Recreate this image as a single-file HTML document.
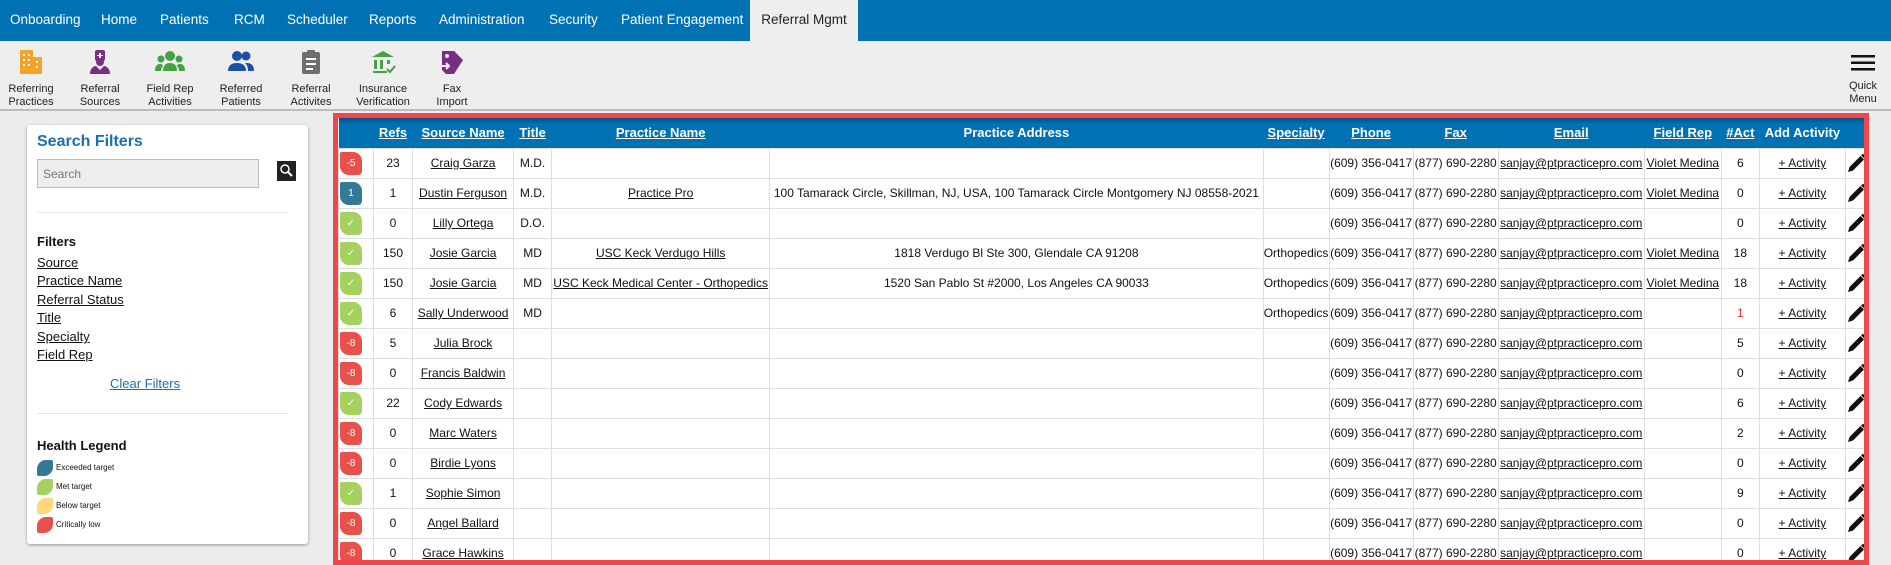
<!DOCTYPE html>
<html><head><meta charset="utf-8"><style>
*{box-sizing:border-box;margin:0;padding:0}
body{width:1891px;height:565px;overflow:hidden;background:#ececec;font-family:"Liberation Sans",Arial,sans-serif;position:relative;color:#111}
.nav{position:absolute;left:0;top:0;width:1891px;height:41px;background:#0071b2}
.nav span{position:absolute;top:12px;color:#fff;font-size:13.5px}
.nav .tab{top:0;height:41px;background:#eee;color:#222;padding-top:12px;left:750px;width:108px;text-align:center}
.tb{position:absolute;left:0;top:41px;width:1891px;height:70px;background:#eee;border-bottom:2px solid #bbb}
.ti{position:absolute;top:8px;width:80px;text-align:center;font-size:11px;line-height:13px;color:#222}
.ti svg{display:block;margin:0 auto 8px}
.panel{position:absolute;left:27px;top:125px;width:281px;height:419px;background:#fff;border-radius:3px;box-shadow:0 1px 3px rgba(0,0,0,.35)}
.panel a{color:#111;text-decoration:underline;font-size:13px;position:absolute;left:10px}
.tablebox{position:absolute;left:333px;top:113px;width:1536px;height:452px;border:5px solid #f3454a;background:#fff;overflow:hidden}
table{border-collapse:collapse;table-layout:fixed;width:1531px;font-size:12px}
th{height:30px;background:linear-gradient(#0b4f7d,#0071b2 6px);color:#fff;font-size:13px;font-weight:bold;text-decoration:underline;text-align:center;white-space:nowrap}
td{height:30px;border:1px solid #ddd;text-align:center;white-space:nowrap;overflow:hidden;padding:0}
td u{text-decoration:underline}
.b{display:block;width:22px;height:23px;border-radius:2px 9px 4px 9px;color:#fff;font-size:10px;line-height:23px;text-align:center;margin-left:1px}
.r{background:#e8504c}.g{background:#a5d25f}.bl{background:#327a96}
.pen{display:block;margin:0 auto}
</style></head><body>
<div class="nav">
<span style="left:10px">Onboarding</span><span style="left:101px">Home</span><span style="left:160px">Patients</span><span style="left:234px">RCM</span><span style="left:287px">Scheduler</span><span style="left:369px">Reports</span><span style="left:439px">Administration</span><span style="left:549px">Security</span><span style="left:621px">Patient Engagement</span><span class="tab">Referral Mgmt</span>
</div>
<div class="tb">
<div class="ti" style="left:-9px"><svg width="26" height="26" viewBox="0 0 26 26"><rect x="2" y="1" width="13" height="24" fill="#f6a32a"/><rect x="15" y="8" width="9" height="17" fill="#f6a32a"/><g fill="#fff"><rect x="5" y="5" width="2" height="2"/><rect x="10" y="5" width="2" height="2"/><rect x="5" y="10" width="2" height="2"/><rect x="10" y="10" width="2" height="2"/><rect x="5" y="15" width="2" height="2"/><rect x="10" y="15" width="2" height="2"/><rect x="18" y="12" width="2" height="2"/><rect x="18" y="17" width="2" height="2"/></g></svg>Referring<br>Practices</div>
<div class="ti" style="left:60px"><svg width="26" height="26" viewBox="0 0 26 26"><rect x="8" y="1" width="10" height="11" rx="2" fill="#7b2d84"/><path d="M12 4h2v2h2v1h-2v2h-2v-2h-2v-1h2z" fill="#fff"/><circle cx="13" cy="13" r="4" fill="#7b2d84"/><path d="M3 25c0-6 4-8 6-8l4 4 4-4c2 0 6 2 6 8z" fill="#7b2d84"/></svg>Referral<br>Sources</div>
<div class="ti" style="left:130px"><svg width="30" height="26" viewBox="0 0 30 26"><g fill="#44a244"><circle cx="15" cy="7" r="5"/><circle cx="6" cy="10" r="3.5"/><circle cx="24" cy="10" r="3.5"/><path d="M8 22c0-6 3-8 7-8s7 2 7 8z"/><path d="M0 22c0-5 2-7 5-7 2 0 3 1 3 2-1 1-2 3-2 5z"/><path d="M30 22c0-5-2-7-5-7-2 0-3 1-3 2 1 1 2 3 2 5z"/></g></svg>Field Rep<br>Activities</div>
<div class="ti" style="left:201px"><svg width="28" height="26" viewBox="0 0 28 26"><g fill="#1f4fa0"><circle cx="10" cy="7" r="5"/><circle cx="19" cy="7" r="4.5"/><path d="M1 22c0-6 4-8 9-8s9 2 9 8z"/><path d="M20 14c4 0 7 2 7 8h-6c0-4-1-6-3-8z"/></g></svg>Referred<br>Patients</div>
<div class="ti" style="left:271px"><svg width="26" height="26" viewBox="0 0 26 26"><rect x="4" y="3" width="18" height="22" rx="2" fill="#6e6e6e"/><rect x="9" y="1" width="8" height="4" rx="1" fill="#6e6e6e"/><g fill="#fff"><rect x="8" y="9" width="10" height="2"/><rect x="8" y="14" width="10" height="2"/><rect x="8" y="19" width="7" height="2"/></g></svg>Referral<br>Activites</div>
<div class="ti" style="left:343px"><svg width="26" height="26" viewBox="0 0 26 26"><g fill="#44a244"><path d="M2 8l11-6 11 6z"/><rect x="4" y="11" width="3" height="9"/><rect x="10" y="11" width="3" height="9"/><rect x="3" y="22" width="14" height="2"/><rect x="17" y="11" width="3" height="4"/></g><path d="M17 20l3 3 5-6" stroke="#44a244" stroke-width="2" fill="none"/></svg>Insurance<br>Verification</div>
<div class="ti" style="left:412px"><svg width="26" height="26" viewBox="0 0 26 26"><path d="M3 2h12l9 9-9 14H7l-4-4z" fill="#7b2d84"/><circle cx="8" cy="7" r="2" fill="#eee"/><path d="M2 17h8M7 14l3 3-3 3" stroke="#eee" stroke-width="2" fill="none"/></svg>Fax<br>Import</div>
<div class="ti" style="left:1823px;top:13px"><svg width="24" height="18" viewBox="0 0 24 18"><rect y="1" width="24" height="2.5" fill="#111"/><rect y="7.5" width="24" height="2.5" fill="#111"/><rect y="14" width="24" height="2.5" fill="#111"/></svg>Quick<br>Menu</div>
</div>
<div class="panel">
<div style="position:absolute;left:10px;top:8px;color:#1b6fb0;font-weight:bold;font-size:16px">Search Filters</div>
<div style="position:absolute;left:10px;top:34px;width:222px;height:29px;background:#eee;border:1px solid #bbb;font-size:12px;color:#777;padding:7px 5px">Search</div>
<div style="position:absolute;left:250px;top:36px;width:19px;height:20px;background:#222"><svg width="19" height="20" viewBox="0 0 19 20"><circle cx="8" cy="8" r="4" stroke="#fff" stroke-width="1.5" fill="none"/><path d="M11 11l4 4" stroke="#fff" stroke-width="2"/></svg></div>
<div style="position:absolute;left:10px;top:87px;width:251px;border-top:1px solid #e6e6e6"></div>
<div style="position:absolute;left:10px;top:109px;font-weight:bold;font-size:13px">Filters</div>
<a style="top:130px">Source</a><a style="top:148px">Practice Name</a><a style="top:167px">Referral Status</a><a style="top:185px">Title</a><a style="top:204px">Specialty</a><a style="top:222px">Field Rep</a>
<a style="left:83px;top:251px;color:#1b6fb0">Clear Filters</a>
<div style="position:absolute;left:10px;top:288px;width:251px;border-top:1px solid #e6e6e6"></div>
<div style="position:absolute;left:10px;top:313px;font-weight:bold;font-size:13px">Health Legend</div>
<div style="position:absolute;left:10px;top:333px;font-size:8px;line-height:19px">
<div><span class="b bl" style="display:inline-block;width:16px;height:16px;border-radius:9px 2px 9px 2px;vertical-align:middle;margin:0 3px 0 0"></span>Exceeded target</div>
<div><span class="b g" style="display:inline-block;width:16px;height:16px;border-radius:9px 2px 9px 2px;vertical-align:middle;margin:0 3px 0 0"></span>Met target</div>
<div><span class="b" style="background:#fdd878;display:inline-block;width:16px;height:16px;border-radius:9px 2px 9px 2px;vertical-align:middle;margin:0 3px 0 0"></span>Below target</div>
<div><span class="b r" style="display:inline-block;width:16px;height:16px;border-radius:9px 2px 9px 2px;vertical-align:middle;margin:0 3px 0 0"></span>Critically low</div>
</div>
</div>
<div class="tablebox">
<table>
<colgroup><col style="width:35px"><col style="width:39px"><col style="width:101px"><col style="width:38px"><col style="width:218px"><col style="width:493px"><col style="width:66px"><col style="width:84px"><col style="width:85px"><col style="width:146px"><col style="width:77px"><col style="width:38px"><col style="width:86px"><col style="width:23px"></colgroup>
<tr><th></th><th>Refs</th><th>Source Name</th><th>Title</th><th>Practice Name</th><th style="text-decoration:none">Practice Address</th><th>Specialty</th><th>Phone</th><th>Fax</th><th>Email</th><th>Field Rep</th><th>#Act</th><th style="text-decoration:none">Add Activity</th><th></th></tr>
<tbody id="tb"></tbody>
</table>
</div>
<script>
var R=[["r","-5","23","Craig Garza","M.D.","","","","Violet Medina","6"],
["bl","1","1","Dustin Ferguson","M.D.","Practice Pro","100 Tamarack Circle, Skillman, NJ, USA, 100 Tamarack Circle Montgomery NJ 08558-2021","","Violet Medina","0"],
["g","✓","0","Lilly Ortega","D.O.","","","","","0"],
["g","✓","150","Josie Garcia","MD","USC Keck Verdugo Hills","1818 Verdugo Bl Ste 300, Glendale CA 91208","Orthopedics","Violet Medina","18"],
["g","✓","150","Josie Garcia","MD","USC Keck Medical Center - Orthopedics","1520 San Pablo St #2000, Los Angeles CA 90033","Orthopedics","Violet Medina","18"],
["g","✓","6","Sally Underwood","MD","","","Orthopedics","","1"],
["r","-8","5","Julia Brock","","","","","","5"],
["r","-8","0","Francis Baldwin","","","","","","0"],
["g","✓","22","Cody Edwards","","","","","","6"],
["r","-8","0","Marc Waters","","","","","","2"],
["r","-8","0","Birdie Lyons","","","","","","0"],
["g","✓","1","Sophie Simon","","","","","","9"],
["r","-8","0","Angel Ballard","","","","","","0"],
["r","-8","0","Grace Hawkins","","","","","","0"]];
var pen='<svg class="pen" width="20" height="20" viewBox="0 0 20 20"><path d="M1 19l1.5-5 11-11 3.5 3.5-11 11z" fill="#111"/><path d="M15 1.5l3.5 3.5" stroke="#111" stroke-width="2.5"/></svg>';
var h="";R.forEach(function(r,i){h+='<tr><td><span class="b '+r[0]+'">'+r[1]+'</span></td><td>'+r[2]+'</td><td><u>'+r[3]+'</u></td><td>'+r[4]+'</td><td><u>'+r[5]+'</u></td><td>'+r[6]+'</td><td>'+r[7]+'</td><td>(609) 356-0417</td><td>(877) 690-2280</td><td><u>sanjay@ptpracticepro.com</u></td><td><u>'+r[8]+'</u></td><td'+(i==5?' style="color:#d33"':'')+'>'+r[9]+'</td><td><u>+ Activity</u></td><td>'+pen+'</td></tr>'});
document.getElementById("tb").innerHTML=h;
</script>
</body></html>
